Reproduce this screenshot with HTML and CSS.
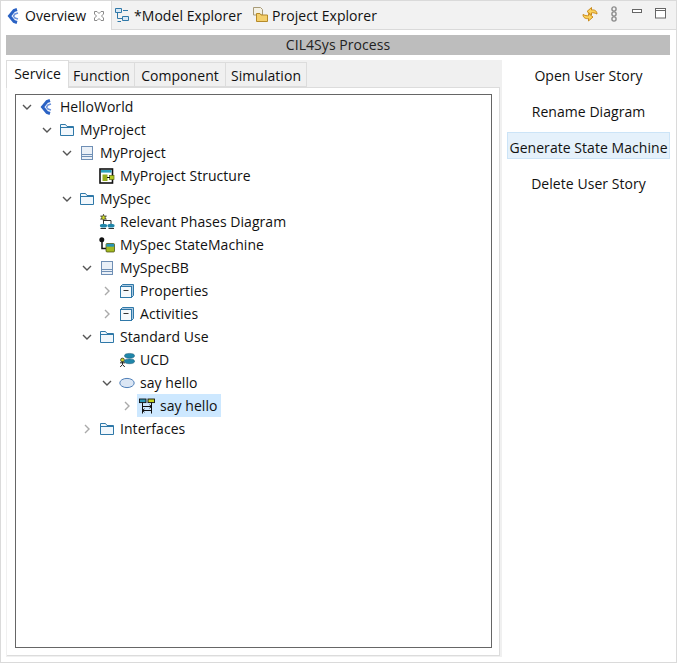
FILE: index.html
```html
<!DOCTYPE html>
<html lang="en">
<head>
<meta charset="utf-8">
<title>CIL4Sys Process</title>
<link rel="stylesheet" href="styles.css">
</head>
<body>
<svg class="defs" width="0" height="0" aria-hidden="true">
  <defs>
    <symbol id="i-cil" viewBox="0 0 16 16">
      <path d="M11 1.5 L8 2.5 L3.5 8 L8 13.5 L11 14.5" fill="none" stroke="#2a62c4" stroke-width="3"/>
      <path d="M12 5 L9 6 L7.5 8 L9 10 L12 11" fill="none" stroke="#6d93dc" stroke-width="1.5"/>
    </symbol>
    <symbol id="i-folder" viewBox="0 0 16 16">
      <path d="M1.5 13.5 V2.5 H6.5 L8 4.5 H14.5 V13.5 Z" fill="#f1f7fc" stroke="#2f78a8"/>
      <path d="M1.5 5.5 H14.5" stroke="#2f78a8"/>
    </symbol>
    <symbol id="i-book" viewBox="0 0 16 16">
      <rect x="2.5" y="1.5" width="11" height="13" fill="#eaf0f7" stroke="#6f8fb5"/>
      <path d="M2.5 9.5 H13.5 M2.5 11.5 H13.5" stroke="#6f8fb5"/>
    </symbol>
    <symbol id="i-struct" viewBox="0 0 16 16">
      <rect x="1" y="1" width="12.5" height="14" fill="#fff" stroke="#111" stroke-width="1.6"/>
      <rect x="2" y="2" width="10.5" height="2.6" fill="#2aa0bd"/>
      <rect x="3.5" y="6.5" width="5" height="6.5" fill="#96ad1e"/>
      <rect x="10.5" y="7.5" width="4.5" height="4" fill="#b4cc22" stroke="#5b690c" stroke-width=".7"/>
      <path d="M8 9.5 H11" stroke="#111"/>
    </symbol>
    <symbol id="i-phases" viewBox="0 0 16 16">
      <path d="M4.5 .3 L5.3 2.3 L7.3 1.9 L6.2 3.6 L7.3 5.3 L5.3 4.9 L4.5 6.9 L3.7 4.9 L1.7 5.3 L2.8 3.6 L1.7 1.9 L3.7 2.3 Z" fill="#d3df2c" stroke="#222" stroke-width=".7"/>
      <path d="M4.5 6 V10 M12 6.5 V10 M4.5 6.5 H12 M1.5 14.5 H7 M9.5 14.5 H15" stroke="#333" fill="none"/>
      <ellipse cx="4.5" cy="11.7" rx="3.6" ry="1.9" fill="#1f86aa"/>
      <ellipse cx="12" cy="11.7" rx="3.6" ry="1.9" fill="#1f86aa"/>
    </symbol>
    <symbol id="i-sm" viewBox="0 0 16 16">
      <circle cx="2.8" cy="2.8" r="2.5" fill="#111"/>
      <path d="M3 4 V11.5 H7" fill="none" stroke="#111" stroke-width="1.5"/>
      <rect x="7" y="6.5" width="8.5" height="8.5" rx="1" fill="#a4b921" stroke="#3c4509" stroke-width=".7"/>
      <rect x="7.4" y="6.9" width="7.7" height="2.8" fill="#2794b5"/>
    </symbol>
    <symbol id="i-pkg" viewBox="0 0 16 16">
      <path d="M3.5 1.5 H14.5 V12.5 L12.5 14.5 H1.5 V3.5 Z" fill="#a9c8e0" stroke="#2f78a8"/>
      <rect x="1.5" y="3.5" width="11" height="11" fill="#f5f9fc" stroke="#2f78a8"/>
      <path d="M4.5 7.5 H9.5" stroke="#333"/>
    </symbol>
    <symbol id="i-ucd" viewBox="0 0 16 16">
      <circle cx="3.5" cy="8" r="1.9" fill="#c9d42a" stroke="#222" stroke-width=".7"/>
      <path d="M3.5 9.5 V12.5 M1 10.8 H6 M1.2 15 L3.5 12.5 L5.8 15" stroke="#222" fill="none"/>
      <ellipse cx="10.5" cy="3.8" rx="5" ry="2.4" fill="#1f86aa" stroke="#15536e" stroke-width=".5"/>
      <ellipse cx="10.5" cy="9.3" rx="5" ry="2.4" fill="#1f86aa" stroke="#15536e" stroke-width=".5"/>
    </symbol>
    <symbol id="i-oval" viewBox="0 0 16 16">
      <ellipse cx="8" cy="8" rx="7.2" ry="4.6" fill="#dbe6f4" stroke="#4f7fb8"/>
    </symbol>
    <symbol id="i-seq" viewBox="0 0 16 16">
      <rect x=".5" y="1" width="6.5" height="3.6" fill="#2b97b8" stroke="#111" stroke-width=".9"/>
      <rect x="9" y="1" width="6.5" height="3.6" fill="#c5d51f" stroke="#111" stroke-width=".9"/>
      <path d="M3.5 4.5 V15.5 M12.5 4.5 V15.5 M3.5 8.5 H12.5 M10.5 6.8 L12.5 8.5 L10.5 10.2 M3.5 12.5 H12.5 M5.5 10.8 L3.5 12.5 L5.5 14.2" fill="none" stroke="#111"/>
    </symbol>
    <symbol id="i-down" viewBox="0 0 10 10">
      <path d="M1 3 L5 7 L9 3" fill="none" stroke="#555" stroke-width="1.4"/>
    </symbol>
    <symbol id="i-right" viewBox="0 0 10 10">
      <path d="M3 1 L7 5 L3 9" fill="none" stroke="#aaa" stroke-width="1.4"/>
    </symbol>
  </defs>
</svg>

<div class="window">
  <header class="viewbar">
    <div class="viewtab active">
      <svg class="icon"><use href="#i-cil"/></svg>
      <span>Overview</span>
      <svg class="close" viewBox="0 0 12 12"><path d="M1.5 1.5 H4 L6 3.5 L8 1.5 H10.5 V4 L8.5 6 L10.5 8 V10.5 H8 L6 8.5 L4 10.5 H1.5 V8 L3.5 6 L1.5 4 Z" fill="#fff" stroke="#8a8a8a"/></svg>
    </div>
    <div class="viewtab">
      <svg class="icon" viewBox="0 0 16 16"><path d="M1.5 1.5 H7.5 V5.5 H1.5 Z M8.5 9.5 H14.5 V13.5 H8.5 Z" fill="#d9e8f5" stroke="#2f78a8"/><path d="M3.5 5.5 V11.5 H8.5 M9 3.5 H14 M3.5 14.5 H7" fill="none" stroke="#2f78a8"/></svg>
      <span>*Model Explorer</span>
    </div>
    <div class="viewtab">
      <svg class="icon" viewBox="0 0 16 16"><path d="M1.5 .5 H8.5 L10.5 2.5 V8 H1.5 V.5 Z" fill="#f4f1e4" stroke="#a89b78"/><path d="M4.5 14.5 V6.5 H8 L9 8 H15.5 V14.5 Z" fill="#f4cf6b" stroke="#b58a2a"/></svg>
      <span>Project Explorer</span>
    </div>
    <div class="tools">
      <svg class="tool sync" viewBox="0 0 16 16"><path d="M15 8 C15 4.5 12 3.5 9.5 4 V1.5 L5 5.5 L9.5 9 V6.8 C11 6.5 13 7 15 8 Z" fill="#fbd25c" stroke="#c5820f" stroke-width=".9"/><path d="M1 8.5 C1 12 4 13 6.5 12.5 V15 L11 11 L6.5 7.5 V9.7 C5 10 3 9.5 1 8.5 Z" fill="#fbd25c" stroke="#c5820f" stroke-width=".9"/></svg>
      <svg class="tool link" viewBox="0 0 8 16"><circle cx="4" cy="3" r="2.1" fill="none" stroke="#8c8c8c" stroke-width="1.4"/><circle cx="4" cy="8" r="2.1" fill="none" stroke="#8c8c8c" stroke-width="1.4"/><circle cx="4" cy="13" r="2.1" fill="none" stroke="#8c8c8c" stroke-width="1.4"/></svg>
      <svg class="tool min" viewBox="0 0 10 5"><rect x=".5" y=".5" width="9" height="3" fill="#fff" stroke="#666"/></svg>
      <svg class="tool max" viewBox="0 0 11 11"><rect x=".5" y=".5" width="10" height="9.5" fill="#fff" stroke="#666"/><path d="M.5 2.5 H10.5" stroke="#666"/></svg>
    </div>
  </header>

  <main class="content">
    <div class="title">CIL4Sys Process</div>
    <div class="columns">
      <section class="panel">
        <nav class="tabs">
          <div class="tab selected">Service</div>
          <div class="tab">Function</div>
          <div class="tab">Component</div>
          <div class="tab">Simulation</div>
        </nav>
        <div class="tabbody">
          <div class="tree">
            <div class="row l0"><svg class="tw"><use href="#i-down"/></svg><svg class="icon"><use href="#i-cil"/></svg><span class="label">HelloWorld</span></div>
            <div class="row l1"><svg class="tw"><use href="#i-down"/></svg><svg class="icon"><use href="#i-folder"/></svg><span class="label">MyProject</span></div>
            <div class="row l2"><svg class="tw"><use href="#i-down"/></svg><svg class="icon"><use href="#i-book"/></svg><span class="label">MyProject</span></div>
            <div class="row l3"><span class="tw"></span><svg class="icon"><use href="#i-struct"/></svg><span class="label">MyProject Structure</span></div>
            <div class="row l2"><svg class="tw"><use href="#i-down"/></svg><svg class="icon"><use href="#i-folder"/></svg><span class="label">MySpec</span></div>
            <div class="row l3"><span class="tw"></span><svg class="icon"><use href="#i-phases"/></svg><span class="label">Relevant Phases Diagram</span></div>
            <div class="row l3"><span class="tw"></span><svg class="icon"><use href="#i-sm"/></svg><span class="label">MySpec StateMachine</span></div>
            <div class="row l3"><svg class="tw"><use href="#i-down"/></svg><svg class="icon"><use href="#i-book"/></svg><span class="label">MySpecBB</span></div>
            <div class="row l4"><svg class="tw"><use href="#i-right"/></svg><svg class="icon"><use href="#i-pkg"/></svg><span class="label">Properties</span></div>
            <div class="row l4"><svg class="tw"><use href="#i-right"/></svg><svg class="icon"><use href="#i-pkg"/></svg><span class="label">Activities</span></div>
            <div class="row l3"><svg class="tw"><use href="#i-down"/></svg><svg class="icon"><use href="#i-folder"/></svg><span class="label">Standard Use</span></div>
            <div class="row l4"><span class="tw"></span><svg class="icon"><use href="#i-ucd"/></svg><span class="label">UCD</span></div>
            <div class="row l4"><svg class="tw"><use href="#i-down"/></svg><svg class="icon"><use href="#i-oval"/></svg><span class="label">say hello</span></div>
            <div class="row l5"><svg class="tw"><use href="#i-right"/></svg><span class="sel"><svg class="icon"><use href="#i-seq"/></svg><span class="label">say hello</span></span></div>
            <div class="row l3"><svg class="tw"><use href="#i-right"/></svg><svg class="icon"><use href="#i-folder"/></svg><span class="label">Interfaces</span></div>
          </div>
        </div>
      </section>
      <aside class="actions">
        <div class="action">Open User Story</div>
        <div class="action">Rename Diagram</div>
        <div class="action hot">Generate State Machine</div>
        <div class="action">Delete User Story</div>
      </aside>
    </div>
  </main>
</div>
</body>
</html>
```

FILE: styles.css
```css
* { box-sizing: border-box; }
html, body { margin: 0; padding: 0; background: #fff; }
body {
  font-family: "Open Sans", "Noto Sans", sans-serif;
  font-size: 14px;
  color: #111;
  letter-spacing: 0.05px;
}
.defs { position: absolute; }
.window {
  width: 677px;
  height: 663px;
  border: 1px solid #dadada;
  display: flex;
  flex-direction: column;
  background: #fff;
}
.icon { width: 16px; height: 16px; flex: none; }

.viewbar {
  height: 29px;
  flex: none;
  display: flex;
  align-items: stretch;
  background: #f2f2f2;
  border-bottom: 1px solid #dadada;
}
.viewtab {
  display: flex;
  align-items: center;
  gap: 4px;
  padding-left: 2px;
  margin-right: 8px;
  white-space: nowrap;
}
.viewtab.active {
  width: 111px;
  margin-right: 0;
  padding-left: 5px;
  gap: 3px;
  background: #fff;
  border-right: 1px solid #dadada;
  height: 29px;
}
.close { width: 12px; height: 12px; margin-left: 4px; flex: none; }

.tools { margin-left: auto; display: flex; align-items: flex-start; padding-top: 5px; }
.tool { flex: none; display: block; }
.sync { width: 16px; height: 16px; margin-right: 12px; }
.link { width: 8px; height: 16px; margin-right: 14px; }
.min { width: 10px; height: 5px; margin: 3px 13px 0 0; }
.max { width: 11px; height: 11px; margin: 2px 10px 0 0; }

.content {
  flex: 1;
  min-height: 0;
  padding: 5px 6px 5px 5px;
  display: flex;
  flex-direction: column;
}
.title {
  height: 20px;
  flex: none;
  background: #bdbdbd;
  text-align: center;
  line-height: 20px;
  color: #222;
}
.columns {
  flex: 1;
  min-height: 0;
  margin-top: 5px;
  display: flex;
}
.panel {
  width: 496px;
  flex: none;
  background: #f0f0f0;
  display: flex;
  flex-direction: column;
}
.tabs {
  height: 27px;
  flex: none;
  display: grid;
  grid-template-columns: 63px 66px 91px 81px;
  justify-content: start;
  align-items: end;
}
.tab {
  height: 25px;
  padding-top: 1px;
  display: flex;
  align-items: center;
  justify-content: center;
  border: 1px solid #dcdcdc;
  border-left: 0;
}
.tab.selected {
  height: 28px;
  padding: 0 0 3px 0;
  background: #fff;
  border: 1px solid #dcdcdc;
  border-bottom: 0;
  margin-bottom: -1px;
  position: relative;
}
.tabbody {
  flex: 1;
  min-height: 0;
  margin: 0 2px 1px 1px;
  padding: 6px 7px 7px 8px;
  background: #fff;
  border: 1px solid #dcdcdc;
  border-left: 0;
}
.tree {
  height: 100%;
  border: 1px solid #666;
  background: #fff;
}
.row {
  height: 23px;
  display: flex;
  align-items: center;
  white-space: nowrap;
}
.tw { width: 10px; height: 10px; flex: none; margin-right: 7px; }
.label { margin-left: 5px; }
.l0 { padding-left: 6px; }
.l1 { padding-left: 26px; }
.l2 { padding-left: 46px; }
.l3 { padding-left: 66px; }
.l4 { padding-left: 86px; }
.l5 { padding-left: 106px; }
.sel {
  display: flex;
  align-items: center;
  height: 23px;
  padding: 0 3px 0 2px;
  margin-left: -2px;
  background: #cde8ff;
}

.actions {
  flex: 1;
  padding-left: 5px;
  display: flex;
  flex-direction: column;
  gap: 9px;
}
.action {
  height: 27px;
  padding-top: 3px;
  display: flex;
  align-items: center;
  justify-content: center;
  border: 1px solid transparent;
  white-space: nowrap;
}
.action.hot {
  background: #e5f1fb;
  border-color: #cce4f7;
}
```
